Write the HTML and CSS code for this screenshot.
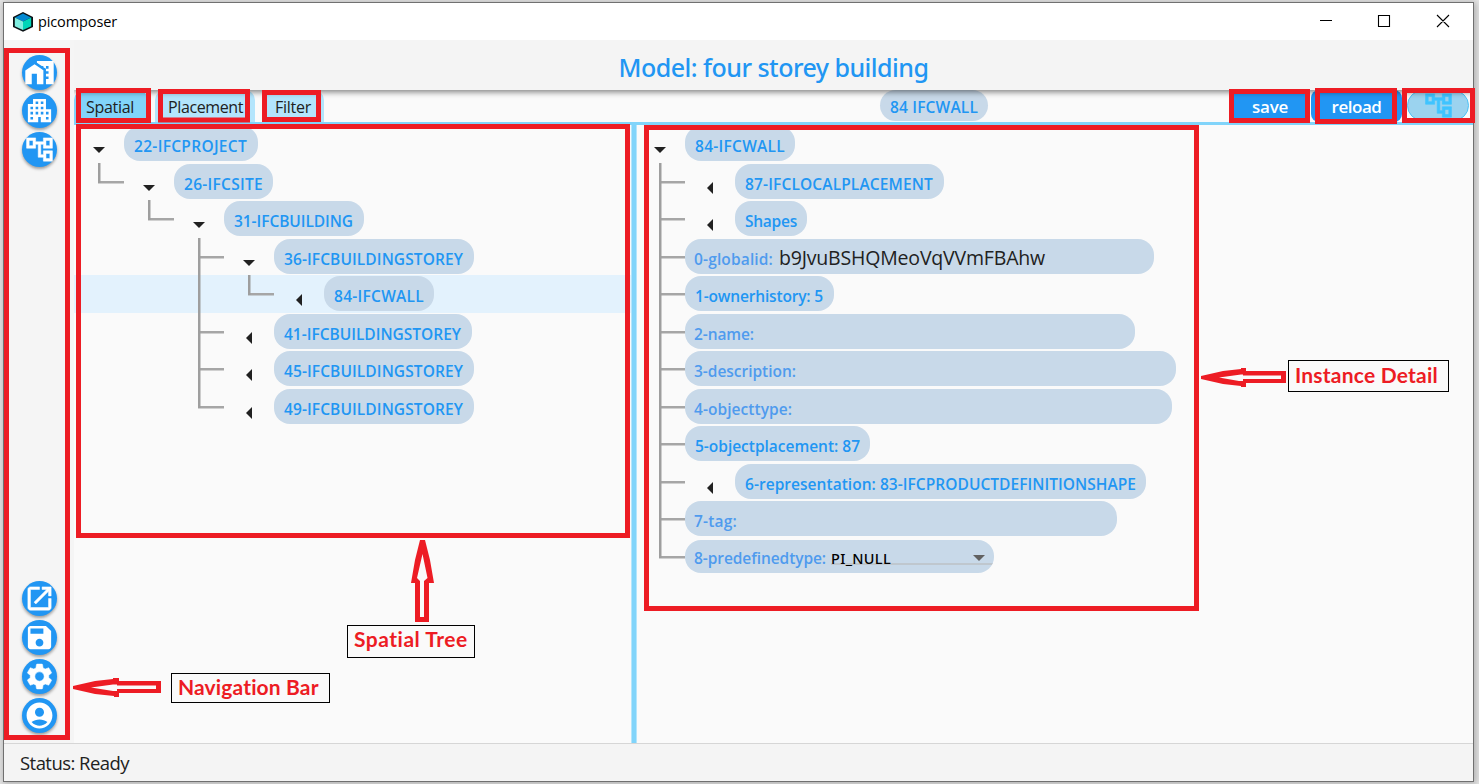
FILE: index.html
```html
<!DOCTYPE html>
<html lang="en">
<head>
<meta charset="utf-8">
<title>picomposer</title>
<link rel="stylesheet" href="styles.css">
</head>
<body>
<svg class="defs" width="0" height="0">
  <symbol id="i-home" viewBox="0 0 24 24"><path d="M8.17 5.7L1 10.48V21h5v-8h4v8h5V10.25z"/><path d="M10 3v1.51l2 1.33L13.73 7H15v.85l2 1.34V11h2v2h-2v2h2v2h-2v4h6V3H10zm9 6h-2V7h2v2z"/></symbol>
  <symbol id="i-apartment" viewBox="0 0 24 24"><path d="M17 11V3H7v4H3v14h8v-4h2v4h8V11h-4zM7 19H5v-2h2v2zm0-4H5v-2h2v2zm0-4H5V9h2v2zm4 4H9v-2h2v2zm0-4H9V9h2v2zm0-4H9V5h2v2zm4 8h-2v-2h2v2zm0-4h-2V9h2v2zm0-4h-2V5h2v2zm4 12h-2v-2h2v2zm0-4h-2v-2h2v2z"/></symbol>
  <symbol id="i-tree" viewBox="0 0 24 24"><path d="M22 11V3h-7v3H9V3H2v8h7V8h2v10h4v3h7v-8h-7v3h-2V8h2v3h7zM7 9H4V5h3v4zm10 6h3v4h-3v-4zm0-10h3v4h-3V5z"/></symbol>
  <symbol id="i-open" viewBox="0 0 24 24"><path d="M19 19H5V5h7V3H5c-1.11 0-2 .9-2 2v14c0 1.1.89 2 2 2h14c1.1 0 2-.9 2-2v-7h-2v7zM14 3v2h3.59l-9.83 9.83 1.41 1.41L19 6.41V10h2V3h-7z"/></symbol>
  <symbol id="i-save" viewBox="0 0 24 24"><path d="M17 3H5c-1.11 0-2 .9-2 2v14c0 1.1.89 2 2 2h14c1.1 0 2-.9 2-2V7l-4-4zm-5 16c-1.66 0-3-1.34-3-3s1.34-3 3-3 3 1.34 3 3-1.34 3-3 3zm3-10H5V5h10v4z"/></symbol>
  <symbol id="i-settings" viewBox="0 0 24 24"><path d="M19.14 12.94c.04-.3.06-.61.06-.94 0-.32-.02-.64-.07-.94l2.03-1.58c.18-.14.23-.41.12-.61l-1.92-3.32c-.12-.22-.37-.29-.59-.22l-2.39.96c-.5-.38-1.03-.7-1.62-.94l-.36-2.54c-.04-.24-.24-.41-.48-.41h-3.84c-.24 0-.43.17-.47.41l-.36 2.54c-.59.24-1.13.57-1.62.94l-2.39-.96c-.22-.08-.47 0-.59.22L2.74 8.87c-.12.21-.08.47.12.61l2.03 1.58c-.05.3-.09.63-.09.94s.02.64.07.94l-2.03 1.58c-.18.14-.23.41-.12.61l1.92 3.32c.12.22.37.29.59.22l2.39-.96c.5.38 1.03.7 1.62.94l.36 2.54c.05.24.24.41.48.41h3.84c.24 0 .44-.17.47-.41l.36-2.54c.59-.24 1.13-.56 1.62-.94l2.39.96c.22.08.47 0 .59-.22l1.92-3.32c.12-.22.07-.47-.12-.61l-2.01-1.58zM12 15.6c-1.98 0-3.6-1.62-3.6-3.6s1.62-3.6 3.6-3.6 3.6 1.62 3.6 3.6-1.62 3.6-3.6 3.6z"/></symbol>
  <symbol id="i-account" viewBox="0 0 24 24"><path d="M12 2C6.48 2 2 6.48 2 12s4.48 10 10 10 10-4.48 10-10S17.52 2 12 2zm0 4c1.93 0 3.5 1.57 3.5 3.5S13.93 13 12 13s-3.5-1.57-3.5-3.5S10.07 6 12 6zm0 14c-2.03 0-4.43-.82-6.14-2.88C7.55 15.8 9.68 15 12 15s4.45.8 6.14 2.12C16.43 19.18 14.03 20 12 20z"/></symbol>
</svg>

<div class="window">
  <header class="titlebar">
    <svg class="logo" viewBox="0 0 20 20"><path d="M10 0l10 5v10l-10 4.8L0 15V5z" fill="#0b1216"/><path d="M10 1.500l8 4.100L10 9.600 2 5.600z" fill="#0288d1"/><path d="M1.800 5.500l8.200 4v8.600L1.800 14.200z" fill="#80eee0"/><path d="M18.200 5.500l-8.200 4v8.600l8.200-3.900z" fill="#00d5b8"/></svg>
    <span class="app-name" data-w="79">picomposer</span>
    <svg class="win-controls" viewBox="0 0 134 16"><path d="M4 6.500h12M62.500 1.500h11v11h-11zM121 1l12 12M133 1l-12 12" fill="none" stroke="#000" stroke-width="1.100"/></svg>
  </header>

  <div class="body">
    <nav class="nav">
      <div class="nav-group">
        <button class="round"><svg><use href="#i-home"/></svg></button>
        <button class="round"><svg><use href="#i-apartment"/></svg></button>
        <button class="round"><svg class="bold"><use href="#i-tree"/></svg></button>
      </div>
      <div class="nav-group">
        <button class="round"><svg class="bold"><use href="#i-open"/></svg></button>
        <button class="round"><svg><use href="#i-save"/></svg></button>
        <button class="round"><svg class="bold"><use href="#i-settings"/></svg></button>
        <button class="round"><svg><use href="#i-account"/></svg></button>
      </div>
    </nav>

    <main class="main">
      <div class="model-bar"><h1 class="model-title" data-w="310">Model: four storey building</h1></div>
      <div class="toolbar">
        <div class="tabs">
          <div class="tab tab-spatial"><span data-w="48">Spatial</span></div>
          <div class="tab tab-placement"><span data-w="75">Placement</span></div>
          <div class="tab tab-filter"><span data-w="36">Filter</span></div>
        </div>
        <div class="current"><span data-w="88">84 IFCWALL</span></div>
        <div class="actions">
          <button class="action action-save"><span data-w="36">save</span></button>
          <button class="action action-reload"><span data-w="50">reload</span></button>
          <button class="toggle"><svg><use href="#i-tree"/></svg></button>
        </div>
      </div>
      <div class="panes">
        <section class="pane pane-tree" id="spatial"></section>
        <div class="splitter"></div>
        <section class="pane pane-detail" id="detail"></section>
      </div>
    </main>
  </div>

  <footer class="status"><span data-w="109">Status: Ready</span></footer>
</div>

<svg class="marks" width="1479" height="784">
  <g fill="none" stroke="#ed1c24" stroke-width="5">
    <path d="M6.500 50.500h61v687h-61z"/>
    <path d="M78.500 90.500h70v30h-70zM160.500 91.500h87v28.500h-87zM264.500 92.500h54v27h-54z"/>
    <path d="M78.500 126.500h549v409h-549zM646.500 127.500h550v481h-550z"/>
    <path d="M1231.500 91.500h76v29h-76zM1317.500 90.500h77v31h-77zM1404.500 90.500h68v30h-68z"/>
  </g>
  <g fill="#ed1c24" fill-rule="evenodd">
    <path d="M73 686l22-5 18-2v-1h6v3h42v12h-42v4h-5v-1l-19-2-22-5zM91 687.500l22-3h4v1h39v3.500h-39v2h-4z"/>
    <path d="M1201 376l22-5 18-2v-1h5v3h40v12h-40v4h-5v-1l-18-2-22-5zM1219 377.500l22-3h2v1h38v3.500h-38v2h-4z"/>
    <path d="M420 540h5l5 20 4 23h-5v39h-14v-39h-4l4-23zM422.500 554l5 24-3.500 3v36h-4v-36l-3-3z"/>
  </g>
</svg>
<div class="callout callout-nav"><span data-w="141">Navigation Bar</span></div>
<div class="callout callout-tree"><span data-w="114">Spatial Tree</span></div>
<div class="callout callout-detail"><span data-w="143">Instance Detail</span></div>
<script src="app.js"></script>
</body>
</html>
```
FILE: styles.css
```css
* { box-sizing: border-box; }
body {
  margin: 0;
  width: 1479px;
  height: 784px;
  overflow: hidden;
  position: relative;
  background: #e6e6e6;
  font-family: "Noto Sans", "Open Sans", sans-serif;
  color: #212121;
}
button { border: 0; padding: 0; font: inherit; }
.defs { position: absolute; }
[data-w] { display: inline-block; white-space: pre; }

.window {
  width: 1471px;
  height: 780px;
  margin: 2px 0 0 3px;
  border: 1px solid #707070;
  background: #fafafa;
  box-shadow: 1px 1px 7px 1px rgba(0, 0, 0, .25);
  display: flex;
  flex-direction: column;
}
.titlebar {
  height: 37px;
  flex: none;
  display: flex;
  align-items: center;
  padding: 0 23px 0 9px;
  background: #fff;
  color: #000;
}
.logo { width: 20px; height: 20px; }
.app-name { margin-left: 5px; font-family: "Open Sans", sans-serif; font-size: 14.500px; }
.win-controls { width: 134px; height: 16px; margin-left: auto; }

.body { display: flex; flex: 1; min-height: 0; }
.nav {
  width: 70px;
  display: flex;
  flex-direction: column;
  justify-content: space-between;
  align-items: center;
  padding: 14.500px 0 10.500px;
  background: #f5f5f5;
}
.nav-group { display: flex; flex-direction: column; gap: 3.800px; }
.round {
  width: 35px;
  height: 35px;
  border-radius: 50%;
  background: #2196f3;
  display: flex;
  align-items: center;
  justify-content: center;
  box-shadow: 0 2px 3px rgba(0, 0, 0, .35);
}
.round svg { width: 31px; height: 31px; fill: #fff; }
.round .bold { stroke: #fff; stroke-width: .4px; }

.main { flex: 1; display: flex; flex-direction: column; min-width: 0; }
.model-bar {
  height: 50px;
  flex: none;
  display: flex;
  align-items: center;
  justify-content: center;
  background: #f4f4f4;
  box-shadow: 0 2px 6px rgba(0, 0, 0, .5);
  clip-path: inset(0 0 -10px 0);
  position: relative;
  z-index: 1;
}
.model-title { margin: 4px 0 0; font-size: 25px; font-weight: 500; color: #2196f3; line-height: 46px; }
.toolbar {
  height: 35px;
  flex: none;
  display: grid;
  grid-template-columns: 806px 108px 1fr;
  border-bottom: 3px solid #81d4fa;
}
.tabs, .actions { display: flex; }
.tab {
  height: 32px;
  border-radius: 10px 10px 0 0;
  background: #b3e5fc;
  font-family: "Open Sans", sans-serif;
  font-size: 16px;
  line-height: 34px;
}
.tab-spatial { width: 74px; padding-left: 12px; background: #81d4fa; }
.tab-placement { width: 100px; margin-left: 7px; padding-left: 13px; }
.tab-filter { width: 62px; margin-left: 7px; padding-left: 13px; }
.current {
  height: 31px;
  border-radius: 16px;
  background: #c8d9e9;
  color: #2196f3;
  font-family: "Open Sans", sans-serif;
  font-size: 15.500px;
  font-weight: 600;
  line-height: 35px;
  text-align: center;
}
.actions { justify-content: flex-end; padding-right: 4px; }
.action {
  height: 32px;
  background: #2196f3;
  color: #fff;
  font-family: "Open Sans", sans-serif;
  font-size: 17px;
  font-weight: 600;
  border-radius: 8px;
  line-height: 33px;
}
.action-save { width: 80px; padding-left: 2px; }
.action-reload { width: 91px; margin-left: 2px; }
.toggle {
  width: 62px;
  height: 31px;
  margin-left: 5px;
  border: 1px solid #4fc3f7;
  border-radius: 16px;
  background: #9bd3ef;
  display: flex;
  justify-content: center;
}
.toggle svg { width: 31px; height: 31px; margin-top: -1px; fill: #40c4ff; stroke: #40c4ff; stroke-width: .5px; }

.panes { flex: 1; display: flex; min-height: 0; }
.pane-tree { width: 557px; }
.splitter { width: 6px; background: #81d4fa; border: 1px solid #b3e5fc; border-width: 0 1px; }
.pane-detail { flex: 1; margin-left: -2px; }
.row { height: 37.500px; display: flex; align-items: center; }
.row.selected { background: #e3f2fd; }
.cell { width: 50px; height: 37.500px; flex: none; display: flex; align-items: center; justify-content: center; }
.cell.v, .cell.t, .cell.l {
  background-repeat: no-repeat;
  background-image: linear-gradient(#9e9e9e, #9e9e9e), linear-gradient(#a6a6a6, #a6a6a6);
}
.cell.v { background-size: 2.500px 100%, 0 0; background-position: 24px 0, 0 0; }
.cell.t { background-size: 2.500px 100%, 27px 2.500px; background-position: 24px 0, 24px 18px; }
.cell.l { background-size: 2.500px 20px, 27px 2.500px; background-position: 24px 0, 24px 18px; }
.open::before, .closed::before { content: ""; margin-top: 13px; border: solid transparent; }
.open::before { border-width: 6px 6px 0; border-top-color: #212121; }
.closed::before { border-width: 6px 6px 6px 0; border-right-color: #212121; }
.pill {
  height: 35px;
  flex: none;
  border-radius: 16px;
  background: #c8d9e9;
  display: flex;
  align-items: center;
  padding: 4.500px 0 0 10px;
  font-family: "Open Sans", sans-serif;
  font-size: 15.500px;
  font-weight: 600;
  line-height: 20px;
  color: #2196f3;
  overflow: hidden;
}
.pill.field { padding-left: 9px; color: #4f9bee; }
.value { margin: -2px 0 0 6px; font-size: 19.500px; font-weight: 400; color: #212121; }
.pill.select { height: 33px; padding: 4px 0 0 9px; }
.choice {
  flex: 1;
  height: 20px;
  margin-left: 5px;
  margin-top: -6px;
  padding-right: 9px;
  display: flex;
  align-items: center;
  justify-content: space-between;
  border-bottom: 2px solid #bfc7ce;
  color: #000;
  font-family: "Noto Sans", sans-serif;
  font-size: 14.500px;
  font-weight: 500;
}
.choice span { position: relative; top: 4px; }
.choice::after { content: ""; border: solid transparent; border-width: 6px 6px 0; border-top-color: #616161; margin-top: 7px; }

.status {
  height: 38px;
  flex: none;
  border-top: 1px solid #d6d6d6;
  background: #f4f4f4;
  padding-left: 16px;
  font-family: "Open Sans", sans-serif;
  font-size: 18.500px;
  line-height: 38px;
}

.marks { position: absolute; left: 0; top: 0; z-index: 5; }
.callout {
  position: absolute;
  z-index: 6;
  border: 1px solid #000;
  padding-left: 6px;
  font-family: Lato, sans-serif;
  font-weight: 700;
  font-size: 21px;
  line-height: 26px;
  color: #ed1c24;
}
.callout-nav { left: 171px; top: 673px; width: 159px; height: 30px; }
.callout-tree { left: 347px; top: 625px; width: 128px; height: 33px; }
.callout-detail { left: 1288px; top: 360px; width: 161px; height: 32px; line-height: 28px; }
```
FILE: app.js
```js
// cells: "." blank, v/t/l guide lines, o open arrow, c closed arrow
const spatial = [
  { cells: "o", label: "22-IFCPROJECT", w: 134, tw: 113 },
  { cells: "lo", label: "26-IFCSITE", w: 99, tw: 79 },
  { cells: ".lo", label: "31-IFCBUILDING", w: 140, tw: 119 },
  { cells: "..to", label: "36-IFCBUILDINGSTOREY", w: 200, tw: 179 },
  { cells: "..vlc", label: "84-IFCWALL", w: 110, tw: 90, selected: true },
  { cells: "..tc", label: "41-IFCBUILDINGSTOREY", w: 198, tw: 177 },
  { cells: "..tc", label: "45-IFCBUILDINGSTOREY", w: 200, tw: 179 },
  { cells: "..lc", label: "49-IFCBUILDINGSTOREY", w: 200, tw: 179 }
];
const detail = [
  { cells: "o", label: "84-IFCWALL", w: 110, tw: 90 },
  { cells: "tc", label: "87-IFCLOCALPLACEMENT", w: 209, tw: 188 },
  { cells: "tc", label: "Shapes", w: 72, tw: 52 },
  { cells: "t", label: "0-globalid:", w: 469, tw: 79, field: true, value: "b9JvuBSHQMeoVqVVmFBAhw", vw: 266 },
  { cells: "t", label: "1-ownerhistory: 5", w: 149, tw: 128 },
  { cells: "t", label: "2-name:", w: 450, tw: 60, field: true },
  { cells: "t", label: "3-description:", w: 491, tw: 102, field: true },
  { cells: "t", label: "4-objecttype:", w: 487, tw: 98, field: true },
  { cells: "t", label: "5-objectplacement: 87", w: 185, tw: 165 },
  { cells: "tc", label: "6-representation: 83-IFCPRODUCTDEFINITIONSHAPE", w: 411, tw: 391 },
  { cells: "t", label: "7-tag:", w: 432, tw: 43, field: true },
  { cells: "l", label: "8-predefinedtype:", w: 309, tw: 132, field: true, choice: "PI_NULL", vw: 60 }
];
const kinds = { ".": "", v: "v", t: "t", l: "l", o: "open", c: "closed" };

function renderTree(id, rows) {
  document.getElementById(id).innerHTML = rows.map(r => {
    const cells = [...r.cells].map(c => `<i class="cell ${kinds[c]}"></i>`).join("");
    const cls = "pill" + (r.field ? " field" : "") + (r.choice ? " select" : "");
    let extra = "";
    if (r.value) extra = `<span class="value" data-w="${r.vw}">${r.value}</span>`;
    if (r.choice) extra = `<div class="choice"><span data-w="${r.vw}">${r.choice}</span></div>`;
    return `<div class="row${r.selected ? " selected" : ""}">${cells}<div class="${cls}" style="width:${r.w}px"><span data-w="${r.tw}">${r.label}</span>${extra}</div></div>`;
  }).join("");
}
renderTree("spatial", spatial);
renderTree("detail", detail);

// Track each label so that it spans its nominal width.
document.querySelectorAll("[data-w]").forEach(el => {
  const gap = (Number(el.dataset.w) - el.getBoundingClientRect().width) / el.textContent.length;
  el.style.letterSpacing = gap.toFixed(3) + "px";
});
```
